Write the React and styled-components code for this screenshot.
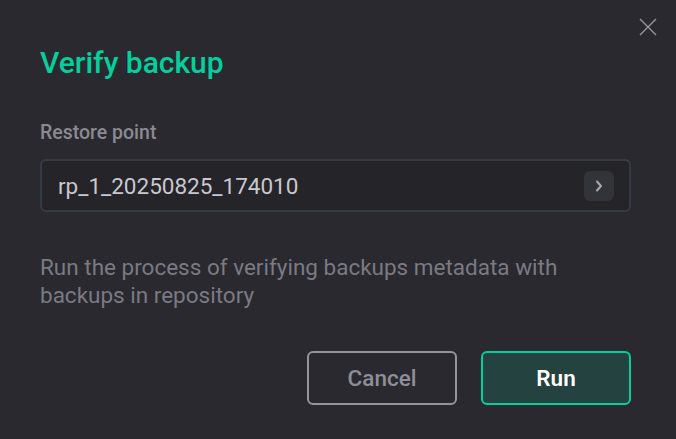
import React from "react";
import styled, { createGlobalStyle } from "styled-components";

const Global = createGlobalStyle`
  html, body {
    margin: 0;
    padding: 0;
    background: #29292f;
  }
  body {
    font-family: Roboto, "Liberation Sans", sans-serif;
  }
`;

const Dialog = styled.section`
  position: relative;
  box-sizing: border-box;
  width: 676px;
  height: 439px;
  padding: 43px 45px 0 40px;
  background: #29292f;
  display: flex;
  flex-direction: column;
`;

const CloseButton = styled.button`
  position: absolute;
  top: 16px;
  right: 17px;
  width: 22px;
  height: 22px;
  padding: 0;
  border: none;
  background: transparent;
  cursor: pointer;
  display: flex;
  align-items: center;
  justify-content: center;
`;

const Title = styled.h2`
  margin: 0;
  font-size: 30px;
  line-height: 40px;
  font-weight: 500;
  color: #05cf9c;
`;

const Label = styled.label`
  margin-top: 37px;
  font-size: 19.5px;
  line-height: 26px;
  font-weight: 500;
  color: #8b8a93;
`;

const Field = styled.div`
  margin-top: 13px;
  box-sizing: border-box;
  width: 591px;
  height: 53px;
  border: 2px solid #353b44;
  border-radius: 6px;
  background: #242429;
  display: flex;
  align-items: center;
  padding: 0 15px 0 16px;
`;

const Value = styled.span`
  flex: 1;
  font-size: 22.5px;
  color: #c9c8d0;
`;

const ChevronButton = styled.button`
  width: 30px;
  height: 30px;
  padding: 0;
  border: none;
  border-radius: 6px;
  background: #33333a;
  display: flex;
  align-items: center;
  justify-content: center;
`;

const Description = styled.p`
  margin: 41px 0 0;
  width: 560px;
  font-size: 22.5px;
  line-height: 28px;
  color: #7b7a83;
`;

const Actions = styled.div`
  margin-top: auto;
  margin-bottom: 34px;
  display: flex;
  justify-content: flex-end;
  gap: 24px;
`;

const Button = styled.button`
  box-sizing: border-box;
  width: 150px;
  height: 54px;
  border-radius: 6px;
  border: 2px solid ${(p) => (p.primary ? "#05cf9c" : "#94939e")};
  background: ${(p) => (p.primary ? "#244240" : "transparent")};
  color: ${(p) => (p.primary ? "#ffffff" : "#8f8e99")};
  font-family: Roboto, "Liberation Sans", sans-serif;
  font-size: 22.5px;
  font-weight: ${(p) => (p.primary ? 600 : 500)};
  cursor: pointer;
`;

export default function App() {
  return (
    <>
      <Global />
      <Dialog>
        <CloseButton aria-label="Close">
          <svg width="18" height="18" viewBox="0 0 18 18">
            <path
              d="M1 1 L17 17 M17 1 L1 17"
              stroke="#9a9aa2"
              strokeWidth="1.3"
              fill="none"
            />
          </svg>
        </CloseButton>
        <Title>Verify backup</Title>
        <Label>Restore point</Label>
        <Field>
          <Value>rp_1_20250825_174010</Value>
          <ChevronButton aria-label="Choose">
            <svg width="10" height="12" viewBox="0 0 10 12">
              <path
                d="M3 1.5 L7 6 L3 10.5"
                stroke="#a9a8b2"
                strokeWidth="2"
                fill="none"
                strokeLinecap="round"
                strokeLinejoin="round"
              />
            </svg>
          </ChevronButton>
        </Field>
        <Description>
          Run the process of verifying backups metadata with backups in
          repository
        </Description>
        <Actions>
          <Button>Cancel</Button>
          <Button primary>Run</Button>
        </Actions>
      </Dialog>
    </>
  );
}
